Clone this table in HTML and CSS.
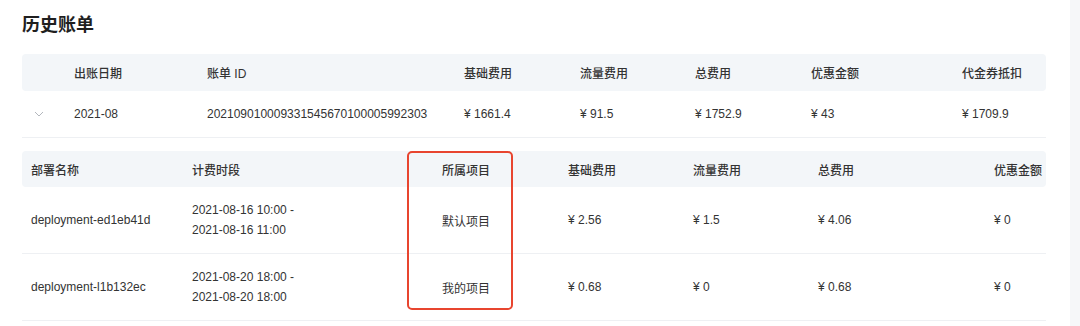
FILE: index.html
```html
<!DOCTYPE html>
<html lang="zh">
<head>
<meta charset="utf-8">
<link rel="stylesheet" href="styles.css">
</head>
<body>
<div class="page">
  <main class="main">
    <h1 class="title">历史账单</h1>

    <div class="bills">
      <div class="row head bill-grid">
        <div class="cell"></div>
        <div class="cell">出账日期</div>
        <div class="cell">账单 ID</div>
        <div class="cell">基础费用</div>
        <div class="cell">流量费用</div>
        <div class="cell">总费用</div>
        <div class="cell">优惠金额</div>
        <div class="cell">代金券抵扣</div>
      </div>
      <div class="row body bill-grid bill-row">
        <div class="cell"><svg class="chev" width="10" height="6" viewBox="0 0 10 6"><path d="M1 1 L5 5 L9 1" fill="none" stroke="#b3b7bd" stroke-width="1"/></svg></div>
        <div class="cell">2021-08</div>
        <div class="cell">202109010009331545670100005992303</div>
        <div class="cell">¥ 1661.4</div>
        <div class="cell">¥ 91.5</div>
        <div class="cell">¥ 1752.9</div>
        <div class="cell">¥ 43</div>
        <div class="cell">¥ 1709.9</div>
      </div>
    </div>

    <div class="detail">
      <div class="row head det-grid">
        <div class="cell">部署名称</div>
        <div class="cell">计费时段</div>
        <div class="cell">所属项目</div>
        <div class="cell">基础费用</div>
        <div class="cell">流量费用</div>
        <div class="cell">总费用</div>
        <div class="cell">优惠金额</div>
      </div>
      <div class="row body det-grid det-row">
        <div class="cell">deployment-ed1eb41d</div>
        <div class="cell period">2021-08-16 10:00 -<br>2021-08-16 11:00</div>
        <div class="cell">默认项目</div>
        <div class="cell">¥ 2.56</div>
        <div class="cell">¥ 1.5</div>
        <div class="cell">¥ 4.06</div>
        <div class="cell">¥ 0</div>
      </div>
      <div class="row body det-grid det-row">
        <div class="cell">deployment-l1b132ec</div>
        <div class="cell period">2021-08-20 18:00 -<br>2021-08-20 18:00</div>
        <div class="cell">我的项目</div>
        <div class="cell">¥ 0.68</div>
        <div class="cell">¥ 0</div>
        <div class="cell">¥ 0.68</div>
        <div class="cell">¥ 0</div>
      </div>
      <div class="highlight"></div>
    </div>
  </main>
  <aside class="track"></aside>
</div>
</body>
</html>
```
FILE: styles.css
```css
* { box-sizing: border-box; }
html, body {
  margin: 0;
  padding: 0;
  background: #ffffff;
}
body {
  font-family: "Liberation Sans", "Noto Sans CJK SC", sans-serif;
  font-size: 12px;
  color: #333333;
}
.page {
  display: flex;
  width: 1080px;
  height: 326px;
  overflow: hidden;
}
.main {
  flex: 1;
  padding: 12px 24px 0 22px;
  min-width: 0;
}
.track {
  width: 10px;
  background: #f6f7f9;
}
.title {
  margin: 0;
  font-size: 18px;
  line-height: 26px;
  font-weight: 700;
  color: #1f1f1f;
  height: 42px;
}
.row {
  display: grid;
  align-items: center;
}
.head {
  background: #f3f6f9;
  border-radius: 4px;
  font-weight: 500;
  color: #333;
}
.bill-grid {
  grid-template-columns: 52px 133px 257px 116px 115px 116px 151px 84px;
  width: 1024px;
}
.bills .head { height: 37px; }
.bill-row {
  height: 47px;
  border-bottom: 1px solid #eef0f3;
}
.bill-row .cell:first-child {
  padding-left: 12px;
  display: flex;
  align-items: center;
}
.chev { display: block; }
.detail {
  position: relative;
  margin-top: 13px;
  width: 1024px;
  overflow: hidden;
}
.det-grid {
  grid-template-columns: 161px 250px 126px 125px 125px 176px 52px;
  padding-left: 9px;
  white-space: nowrap;
}
.detail .head { height: 36px; }
.det-row {
  height: 67px;
  border-bottom: 1px solid #eef0f3;
}
.det-row:last-of-type { height: 66px; }
.period { line-height: 20px; }
.highlight {
  position: absolute;
  left: 385px;
  top: 0;
  width: 106px;
  height: 159px;
  border: 2px solid #e8452f;
  border-radius: 5px;
}
```
